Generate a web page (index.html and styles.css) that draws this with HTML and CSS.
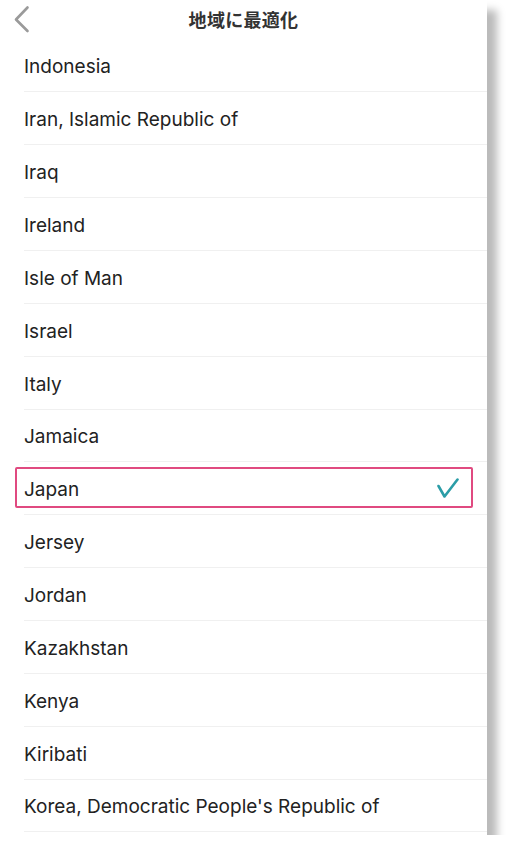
FILE: index.html
```html
<!DOCTYPE html>
<html lang="ja">
<head>
<meta charset="utf-8">
<link rel="stylesheet" href="styles.css">
</head>
<body>
<div class="card">
  <header class="nav">
    <svg class="back" width="20" height="36" viewBox="0 0 20 36"><polyline points="15.5,7.5 4,19.5 15.5,31" fill="none" stroke="#9a9a9a" stroke-width="2.6" stroke-linecap="round" stroke-linejoin="round"/></svg>
    <h1 class="title">地域に最適化</h1>
  </header>
  <ul class="list">
    <li class="row">Indonesia</li>
    <li class="row">Iran, Islamic Republic of</li>
    <li class="row">Iraq</li>
    <li class="row">Ireland</li>
    <li class="row">Isle of Man</li>
    <li class="row">Israel</li>
    <li class="row">Italy</li>
    <li class="row">Jamaica</li>
    <li class="row selected">Japan
      <svg class="check" width="22" height="20" viewBox="0 0 22 20"><polyline points="1.5,8 7.5,18.5 20.5,1.5" fill="none" stroke="#2b9da7" stroke-width="2.6" stroke-linecap="round" stroke-linejoin="round"/></svg>
    </li>
    <li class="row">Jersey</li>
    <li class="row">Jordan</li>
    <li class="row">Kazakhstan</li>
    <li class="row">Kenya</li>
    <li class="row">Kiribati</li>
    <li class="row">Korea, Democratic People's Republic of</li>
  </ul>
</div>
</body>
</html>
```

FILE: styles.css
```css
html, body {
  margin: 0;
  padding: 0;
  background: #ffffff;
}

.card {
  width: 487px;
  height: 835px;
  background: #ffffff;
  overflow: hidden;
  box-shadow: 10px 10px 8px rgba(0, 0, 0, 0.27);
}

.nav {
  position: relative;
  height: 39.5px;
  display: flex;
  align-items: center;
  justify-content: center;
}

.back {
  position: absolute;
  left: 12px;
  top: 0;
}

.title {
  margin: 0;
  font-family: "Noto Sans CJK JP", "Noto Sans", sans-serif;
  font-size: 18px;
  font-weight: 700;
  color: #333333;
  letter-spacing: 0.3px;
  padding-bottom: 2px;
}

.list {
  list-style: none;
  margin: 0;
  padding: 0;
}

.row {
  position: relative;
  height: 52.86px;
  box-sizing: border-box;
  margin-left: 24px;
  border-bottom: 1px solid #f0f0f0;
  display: flex;
  align-items: center;
  justify-content: space-between;
  font-family: Inter, "Liberation Sans", Arial, sans-serif;
  font-size: 19px;
  color: #222222;
  padding-right: 28px;
  padding-top: 3px;
}

.selected::after {
  content: "";
  position: absolute;
  left: -9px;
  right: 14px;
  top: 5px;
  bottom: 6px;
  border: 2px solid #e04a80;
  border-radius: 2px;
}

.check {
  display: block;
  margin-top: -3px;
}
```
